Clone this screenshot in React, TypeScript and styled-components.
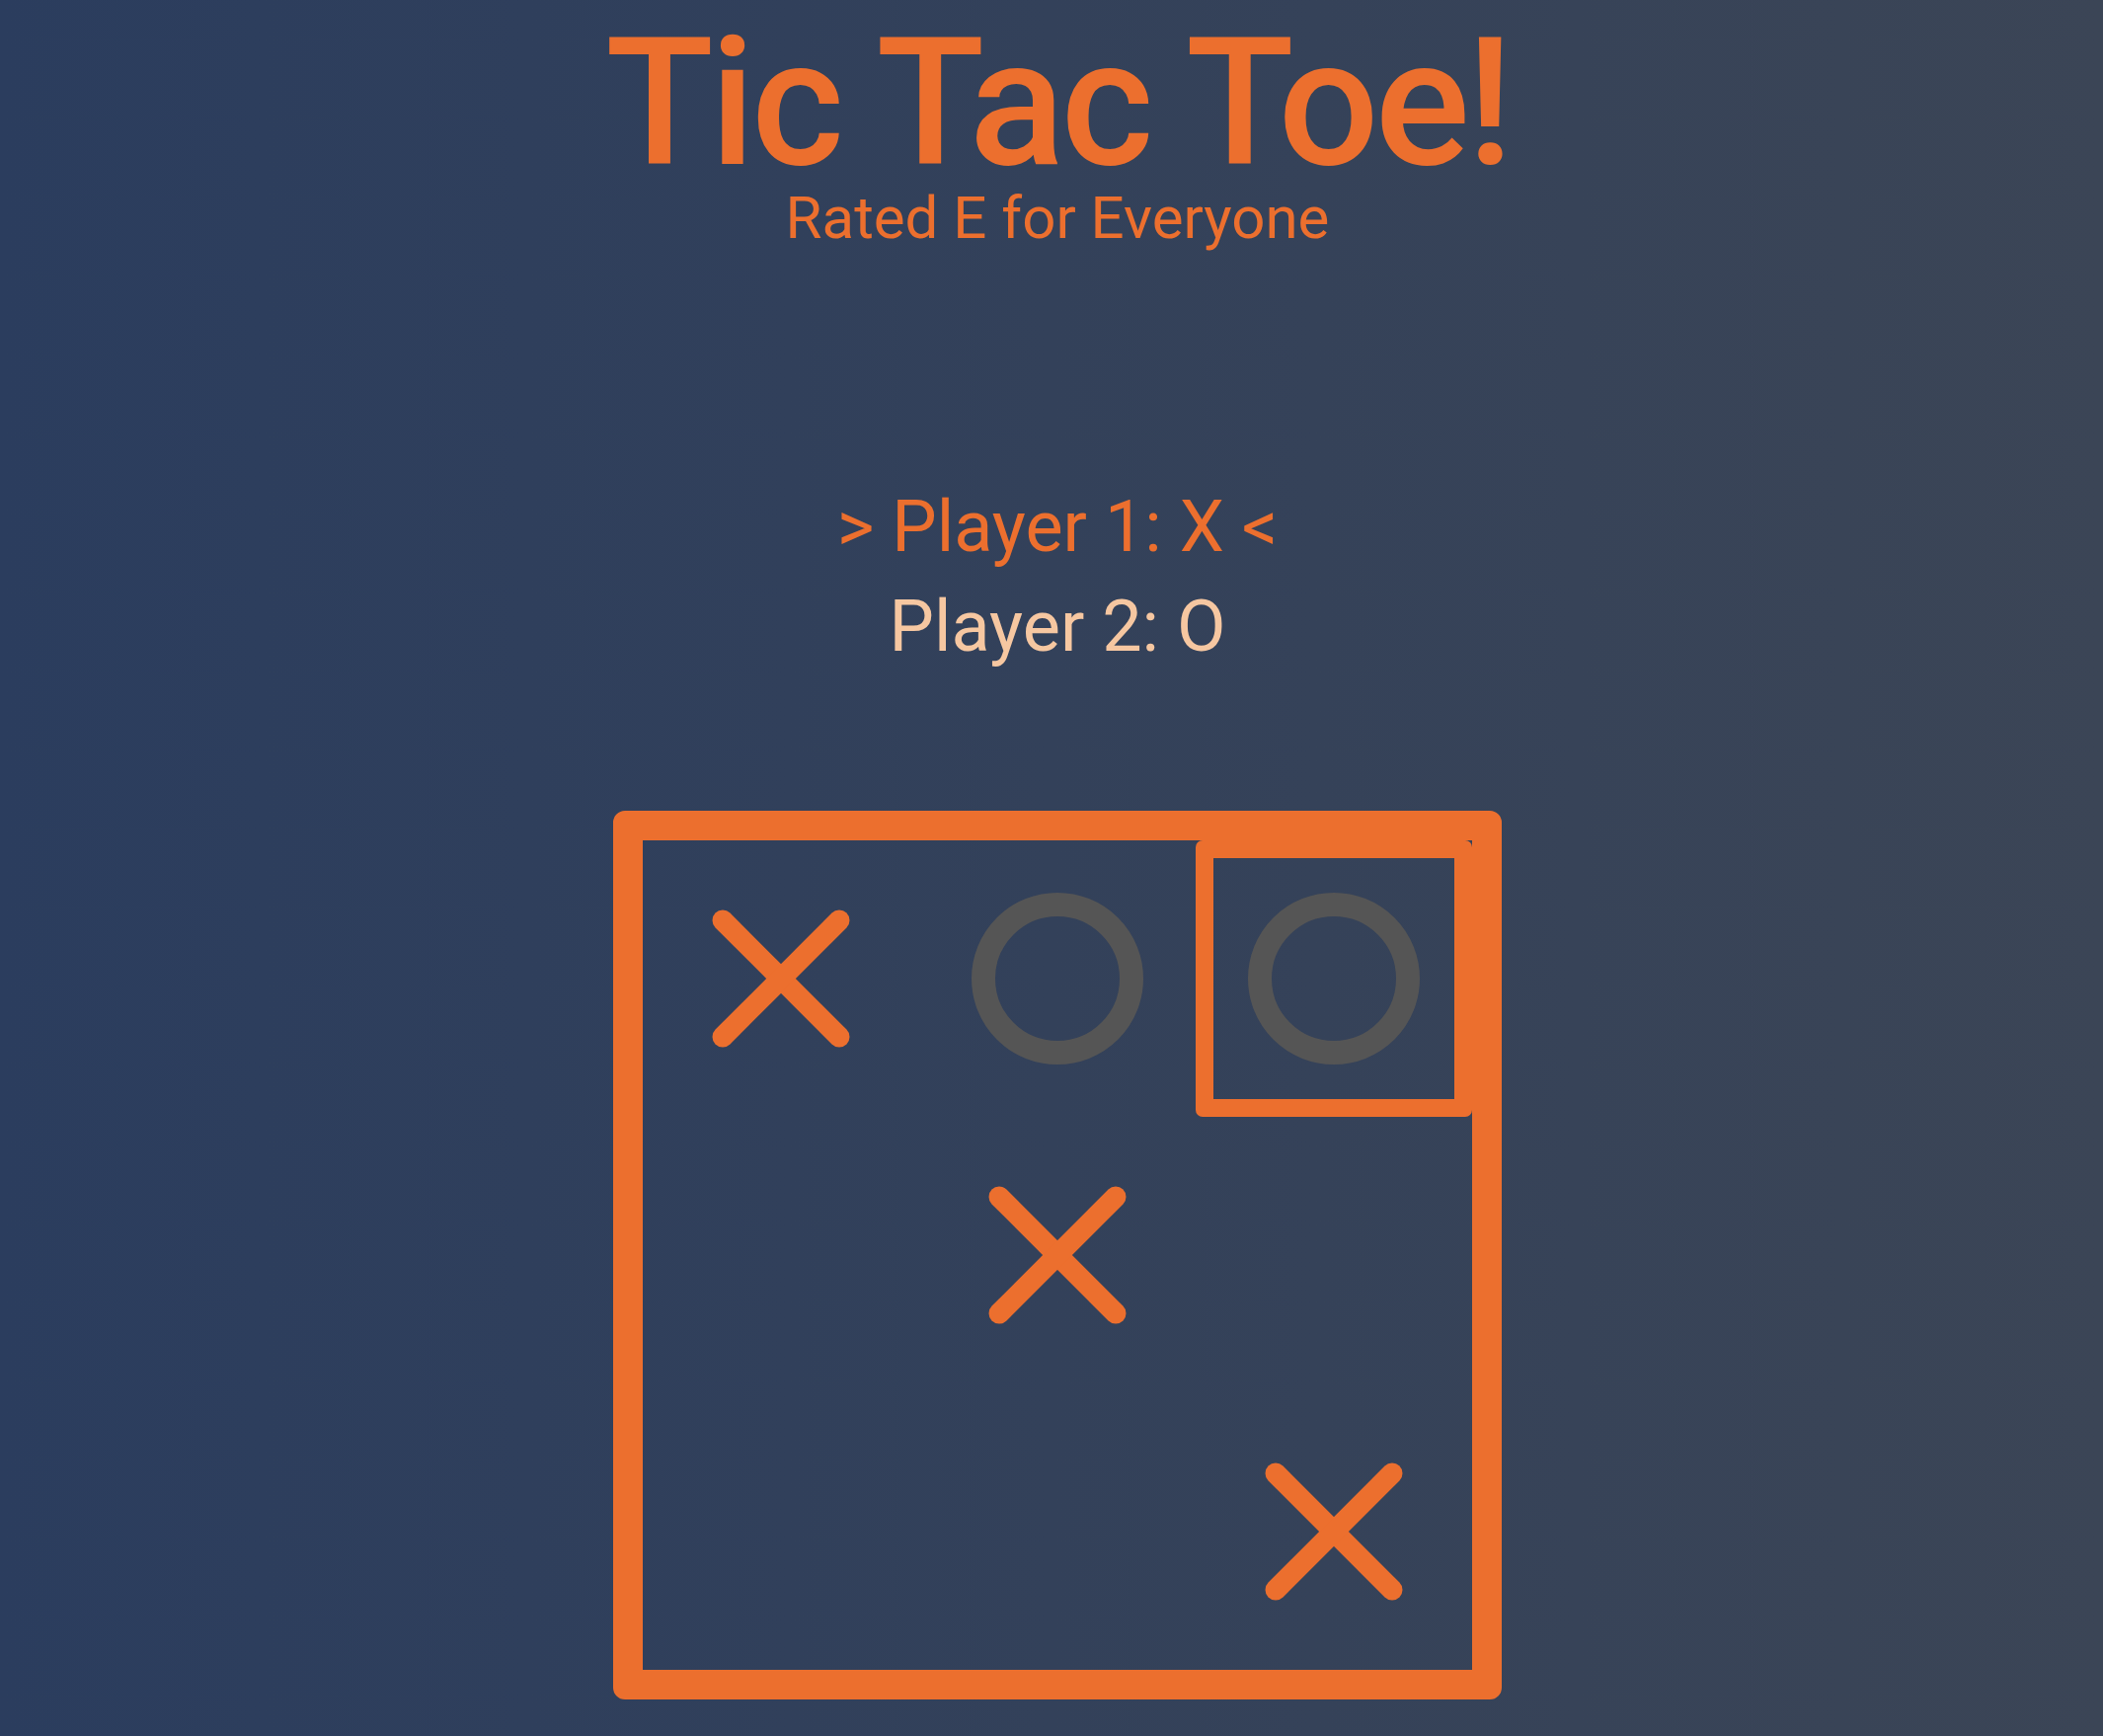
import styled, { createGlobalStyle } from "styled-components"

const ORANGE = "#ec6f2e"

const GlobalStyle = createGlobalStyle`
  html, body {
    margin: 0;
    padding: 0;
    height: 100%;
    overflow: hidden;
  }
  body {
    background: linear-gradient(to right, #2b3d5e, #3b4556);
    font-family: Roboto, "Liberation Sans", sans-serif;
  }
`

const Page = styled.main`
  display: flex;
  flex-direction: column;
  align-items: center;
  padding-left: 12px;
`

const Title = styled.h1`
  margin: 25px 0 0;
  font-size: 180px;
  font-weight: 500;
  letter-spacing: -4px;
  line-height: 160px;
  color: ${ORANGE};
`

const Subtitle = styled.h2`
  margin: 0;
  font-size: 60px;
  font-weight: 400;
  line-height: normal;
  color: ${ORANGE};
`

const Players = styled.section`
  display: flex;
  flex-direction: column;
  align-items: center;
  gap: 16px;
  margin-top: 235px;
`

const PlayerLine = styled.div<{ $turn: boolean }>`
  font-size: 72px;
  line-height: normal;
  color: ${(p) => (p.$turn ? ORANGE : "#f6c7a1")};
`

const Board = styled.div`
  margin-top: 144px;
  width: 840px;
  height: 840px;
  border: 30px solid ${ORANGE};
  border-radius: 12px;
  display: grid;
  grid-template-columns: repeat(3, 280px);
  grid-template-rows: repeat(3, 280px);
`

const Cell = styled.div<{ $hover: boolean }>`
  box-sizing: border-box;
  display: flex;
  align-items: center;
  justify-content: center;
  border: ${(p) => (p.$hover ? `18px solid ${ORANGE}` : "none")};
  border-radius: 7px;
`

const XMark = () => (
  <svg width="140" height="140" viewBox="-70 -70 140 140">
    <g stroke={ORANGE} strokeWidth="21" strokeLinecap="round">
      <line x1="-59" y1="-59" x2="59" y2="59" />
      <line x1="59" y1="-59" x2="-59" y2="59" />
    </g>
  </svg>
)

const OMark = () => (
  <svg width="180" height="180" viewBox="-90 -90 180 180">
    <circle cx="0" cy="0" r="75" fill="none" stroke="#555555" strokeWidth="24" />
  </svg>
)

const board = ["X", "O", "O", "", "X", "", "", "", "X"]

export default function App() {
  return (
    <>
      <GlobalStyle />
      <Page>
        <Title>Tic Tac Toe!</Title>
        <Subtitle>Rated E for Everyone</Subtitle>
        <Players>
          <PlayerLine $turn={true}>&gt; Player 1: X &lt;</PlayerLine>
          <PlayerLine $turn={false}>Player 2: O</PlayerLine>
        </Players>
        <Board>
          {board.map((mark, i) => (
            <Cell key={i} $hover={i === 2}>
              {mark === "X" && <XMark />}
              {mark === "O" && <OMark />}
            </Cell>
          ))}
        </Board>
      </Page>
    </>
  )
}
